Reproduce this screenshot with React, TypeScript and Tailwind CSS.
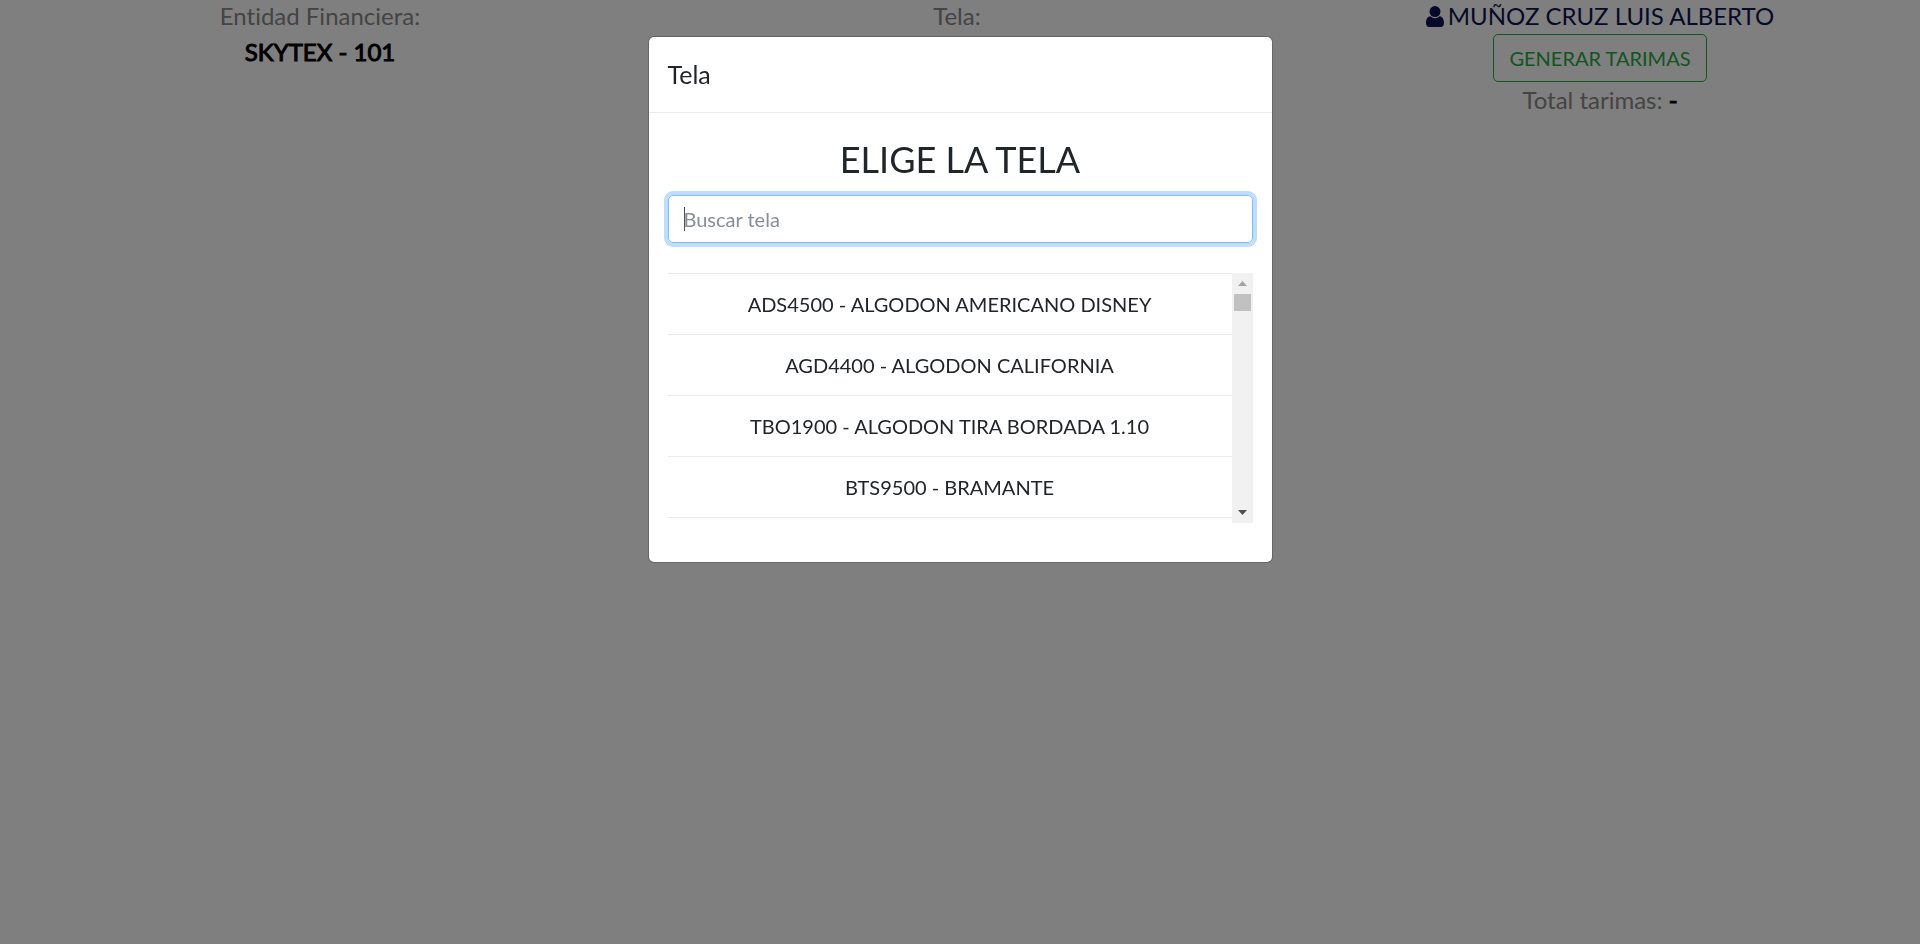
const fabrics = [
  { code: "ADS4500", name: "ALGODON AMERICANO DISNEY" },
  { code: "AGD4400", name: "ALGODON CALIFORNIA" },
  { code: "TBO1900", name: "ALGODON TIRA BORDADA 1.10" },
  { code: "BTS9500", name: "BRAMANTE" },
];

function UserIcon() {
  return (
    <svg
      viewBox="0 0 18 21"
      className="h-[21px] w-[18px]"
      fill="currentColor"
      aria-hidden="true"
    >
      <circle cx="9" cy="5.6" r="5.5" />
      <path d="M4.400 10.300C1.500 10.500 0 13.300 0 17.300 0 19.700 1.300 21 3.300 21h11.400c2 0 3.300-1.300 3.300-3.700 0-4-1.500-6.800-4.400-7-2.600 2.500-6.600 2.500-9.200 0z" />
    </svg>
  );
}

function Header() {
  return (
    <header className="grid grid-cols-3 text-center text-2xl/[32px] text-[#888888]">
      <div>
        <p>Entidad Financiera:</p>
        <p className="text-2xl/[40px] text-black [-webkit-text-stroke:1px]">
          SKYTEX - 101
        </p>
      </div>
      <div>
        <p>Tela:&nbsp;</p>
      </div>
      <div>
        <p className="flex items-center justify-center gap-1 text-[#0c1450]">
          <UserIcon />
          MUÑOZ CRUZ LUIS ALBERTO
        </p>
        <button
          type="button"
          className="mx-auto mt-0.5 block h-12 rounded-[5px] border border-[#28a745] px-[15px] text-xl text-[#28a745]"
        >
          GENERAR TARIMAS
        </button>
        <p className="text-2xl/[36px]">
          Total tarimas:{" "}
          <span className="text-black [-webkit-text-stroke:1px]">-</span>
        </p>
      </div>
    </header>
  );
}

function FabricList() {
  return (
    <div className="mt-[30px] flex h-[250px]">
      <ul className="grow overflow-hidden">
        {fabrics.map((fabric) => (
          <li
            key={fabric.code}
            className="border-t border-[#e9ecef] py-[15px] text-center text-xl/[30px] last:border-b"
          >
            {fabric.code} - {fabric.name}
          </li>
        ))}
      </ul>
      <div className="flex w-[21px] flex-col items-center bg-[#f1f1f1]">
        <button
          type="button"
          aria-label="Subir"
          className="flex h-[21px] w-full items-center justify-center text-[#a3a3a3]"
        >
          <svg viewBox="0 0 9 5" className="h-[5px] w-[9px]" fill="currentColor">
            <path d="M0 5 4.500 0 9 5z" />
          </svg>
        </button>
        <div className="h-[17px] w-[17px] bg-[#c1c1c1]" />
        <button
          type="button"
          aria-label="Bajar"
          className="mt-auto flex h-[21px] w-full items-center justify-center text-[#505050]"
        >
          <svg viewBox="0 0 9 5" className="h-[5px] w-[9px]" fill="currentColor">
            <path d="M0 0h9L4.500 5z" />
          </svg>
        </button>
      </div>
    </div>
  );
}

function FabricModal() {
  return (
    <div className="fixed inset-0 overflow-y-auto bg-black/50">
      <div
        role="dialog"
        aria-modal="true"
        aria-labelledby="modal-title"
        className="mx-auto mt-9 w-full max-w-[625px] rounded-md border border-black/20 bg-white bg-clip-padding"
      >
        <div className="border-b border-[#e9ecef] px-[19px] pt-[18px] pb-[19px]">
          <h5 id="modal-title" className="text-[25px]/[38px]">
            Tela
          </h5>
        </div>
        <div className="px-[19px] pt-5 pb-[39px]">
          <h3 className="mb-[10px] text-center text-4xl/[52px]">
            ELIGE LA TELA
          </h3>
          <div className="relative">
            <input
              type="text"
              autoFocus
              aria-label="Buscar tela"
              placeholder="Buscar tela"
              className="block h-12 w-full rounded-[5px] border border-[#80bdff] px-[15px] text-xl text-[#495057] caret-transparent shadow-[0_0_0_4px_#bfdeff] outline-none placeholder:text-[#868e96]"
            />
            {/* text cursor */}
            <span className="pointer-events-none absolute top-3 left-4 h-6 w-px bg-[#495057]" />
          </div>
          <FabricList />
        </div>
      </div>
    </div>
  );
}

export default function App() {
  return (
    <div className="min-h-screen bg-white font-[Lato,sans-serif] text-[#212529] [font-variant-ligatures:none]">
      <Header />
      <FabricModal />
    </div>
  );
}
